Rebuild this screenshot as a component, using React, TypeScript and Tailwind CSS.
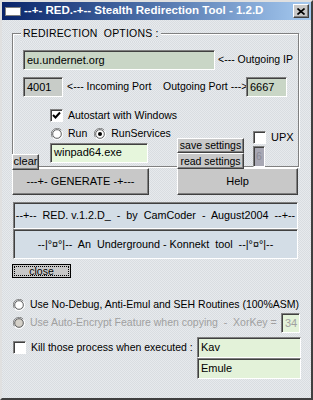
import type { ReactNode } from 'react'

const raised =
  'border border-t-white border-l-white border-r-[#404040] border-b-[#404040] shadow-[inset_-1px_-1px_0_#808080] bg-[#c8c8c8]'
const sunken =
  'border border-t-[#808080] border-l-[#808080] border-r-white border-b-white shadow-[inset_1px_1px_0_#404040]'
const dither =
  'bg-[repeating-conic-gradient(#e7eaed_0_25%,#d9dde1_0_50%)] bg-[length:2px_2px]'

function Field({ value, className }: { value: string; className: string }) {
  return (
    <div className={`${sunken} flex items-center pl-[3px] leading-none whitespace-nowrap ${className}`}>{value}</div>
  )
}

function Check({ checked = false }: { checked?: boolean }) {
  return (
    <span className={`${sunken} bg-white w-[13px] h-[13px] shrink-0 flex items-center justify-center`}>
      {checked && (
        <svg width="9" height="9" viewBox="0 0 9 9">
          <path d="M1 4 L3.5 6.5 L8 1.5" stroke="#000" strokeWidth="2" fill="none" />
        </svg>
      )}
    </span>
  )
}

function Radio({ on = false, disabled = false }: { on?: boolean; disabled?: boolean }) {
  return (
    <svg width="12" height="12" viewBox="0 0 12 12" className="shrink-0">
      <path d="M10.5 2.5 A5.5 5.5 0 0 0 1.5 9.5" stroke="#808080" fill="none" />
      <path d="M1.5 9.5 A5.5 5.5 0 0 0 10.5 2.5" stroke="#ffffff" fill="none" />
      <circle cx="6" cy="6" r="4.3" fill={disabled ? '#d4d0c8' : '#fff'} stroke="#404040" strokeWidth="0.8" />
      {on && <circle cx="6" cy="6" r="2" fill="#000" />}
    </svg>
  )
}

function Btn({ children, className }: { children: ReactNode; className: string }) {
  return (
    <div className={`${raised} flex items-center justify-center leading-none whitespace-nowrap ${className}`}>{children}</div>
  )
}

export default function App() {
  return (
    <div
      className={`w-[313px] h-[400px] ${dither} border-2 border-t-[#e0e0e0] border-l-[#e0e0e0] border-r-[#404040] border-b-[#404040] font-['Liberation_Sans',Arial,sans-serif] text-[10.5px] text-black overflow-hidden`}
    >
      <div className="h-[18px] flex items-center bg-gradient-to-r from-[#0a246a] to-[#a6caf0] pl-[2px] pr-[2px]">
        <span className="w-[16px] h-[9px] bg-white border border-[#808080] mr-[3px] ml-[1px]" />
        <span className="text-white font-bold text-[11.5px] whitespace-nowrap">
          --+- RED.-+-- Stealth Redirection Tool - 1.2.D
        </span>
        <span className={`${raised} ml-auto w-[16px] h-[14px] flex items-center justify-center`}>
          <svg width="8" height="7" viewBox="0 0 8 7">
            <path d="M0.5 0.5 L7.5 6.5 M7.5 0.5 L0.5 6.5" stroke="#000" strokeWidth="1.6" />
          </svg>
        </span>
      </div>

      <div className="pl-[10px]">
        <div className="relative mt-[13px] w-[287px] h-[134px] border border-[#808080] shadow-[inset_1px_1px_0_#fff,1px_1px_0_#fff]">
          <span className={`absolute -top-[8px] left-[8px] px-[2px] ${dither} tracking-[0.2px] whitespace-pre`}>
            REDIRECTION  OPTIONS :
          </span>

          <div className="flex items-center mt-[16px] ml-[10px]">
            <Field value="eu.undernet.org" className="w-[192px] h-[20px] bg-[#c9d6c6] text-[11px]" />
            <span className="ml-[3px] whitespace-nowrap">&lt;--- Outgoing IP</span>
          </div>

          <div className="flex items-center mt-[7px] ml-[10px]">
            <Field value="4001" className="w-[40px] h-[20px] bg-[#c8ccc8] text-[11px]" />
            <span className="ml-[4px] w-[96px] whitespace-nowrap">&lt;--- Incoming Port</span>
            <span className="whitespace-nowrap w-[83px]">Outgoing Port ---&gt;</span>
            <Field value="6667" className="w-[41px] h-[20px] bg-[#c9d6c6] text-[11px]" />
          </div>

          <div className="flex items-center mt-[11px] ml-[37px]">
            <Check checked />
            <span className="ml-[5px]">Autostart with Windows</span>
          </div>

          <div className="flex mt-[4px] h-[41px]">
            <Btn className="self-end -ml-[1px] w-[27px] h-[16px] -mb-[1px] text-[11px]">clear</Btn>
            <div className="ml-[11px] w-[127px]">
              <div className="flex items-center h-[12px]">
                <span className="ml-[1px]" />
                <Radio />
                <span className="ml-[5px]">Run</span>
                <span className="ml-[7px]" />
                <Radio on />
                <span className="ml-[5px]">RunServices</span>
              </div>
              <Field value="winpad64.exe" className="mt-[3px] w-[98px] h-[20px] bg-[#e6f6dc] text-[11px]" />
            </div>
            <div className="mt-[10px] flex flex-col">
              <Btn className="w-[67px] h-[15px] text-[10.5px]">save settings</Btn>
              <Btn className="w-[67px] h-[16px] text-[10.5px]">read settings</Btn>
            </div>
            <div className="ml-[9px] mt-[1px]">
              <div className="flex items-center">
                <Check />
                <span className="ml-[5px] text-[11px]">UPX</span>
              </div>
              <div className={`${sunken} mt-[1px] w-[12px] h-[21px] bg-[#a8a8b4] text-[#8a8a94] flex items-center justify-center`}>
                6
              </div>
            </div>
          </div>
        </div>

        <div className="flex mt-[1px] gap-[28px]">
          <Btn className="w-[137px] h-[27px] text-[11px]">---+- GENERATE -+---</Btn>
          <Btn className="w-[121px] h-[27px] text-[11px]">Help</Btn>
        </div>

        <div className="ml-[1px] mt-[7px] w-[285px]">
          <div className={`${sunken} h-[27px] bg-[#d3dde6] flex items-center justify-center whitespace-pre text-[10.8px]`}>
            --+--  RED. v.1.2.D_  -  by  CamCoder  -  August2004  --+--
          </div>
          <div className={`${sunken} h-[30px] bg-[#d3dde6] flex items-center justify-center whitespace-pre text-[10.8px]`}>
            --|°¤°|--  An  Underground - Konnekt  tool  --|°¤°|--
          </div>
        </div>

        <div className="mt-[5px] w-[59px] h-[14px] border border-black bg-[#c8c8c8] p-[1px]">
          <div className="h-full border border-dotted border-black flex items-center justify-center leading-none">
            close
          </div>
        </div>

        <div className="flex items-center mt-[21px] ml-[1px] h-[12px]">
          <Radio />
          <span className="ml-[5px] whitespace-nowrap">Use No-Debug, Anti-Emul and SEH Routines (100%ASM)</span>
        </div>

        <div className="flex items-center mt-[2px] ml-[1px] h-[20px]">
          <Radio disabled />
          <span className="ml-[5px] w-[251px] whitespace-pre text-[#a0a0a0]">
            Use Auto-Encrypt Feature when copying  -  XorKey =
          </span>
          <Field value="34" className="w-[19px] h-[20px] bg-[#e3f2d9] text-[#a0a0a0] text-[11px]" />
        </div>

        <div className="flex mt-[4px] ml-[1px]">
          <div className="flex items-center mt-[4px] h-[13px] self-start">
            <Check />
            <span className="ml-[5px] w-[166px] whitespace-nowrap">Kill those process when executed :</span>
          </div>
          <div className="flex flex-col">
            <Field value="Kav" className="w-[104px] h-[21px] bg-[#e3f2d9] text-[11px]" />
            <Field value="Emule" className="w-[104px] h-[21px] bg-[#e3f2d9] text-[11px]" />
          </div>
        </div>
      </div>
    </div>
  )
}
